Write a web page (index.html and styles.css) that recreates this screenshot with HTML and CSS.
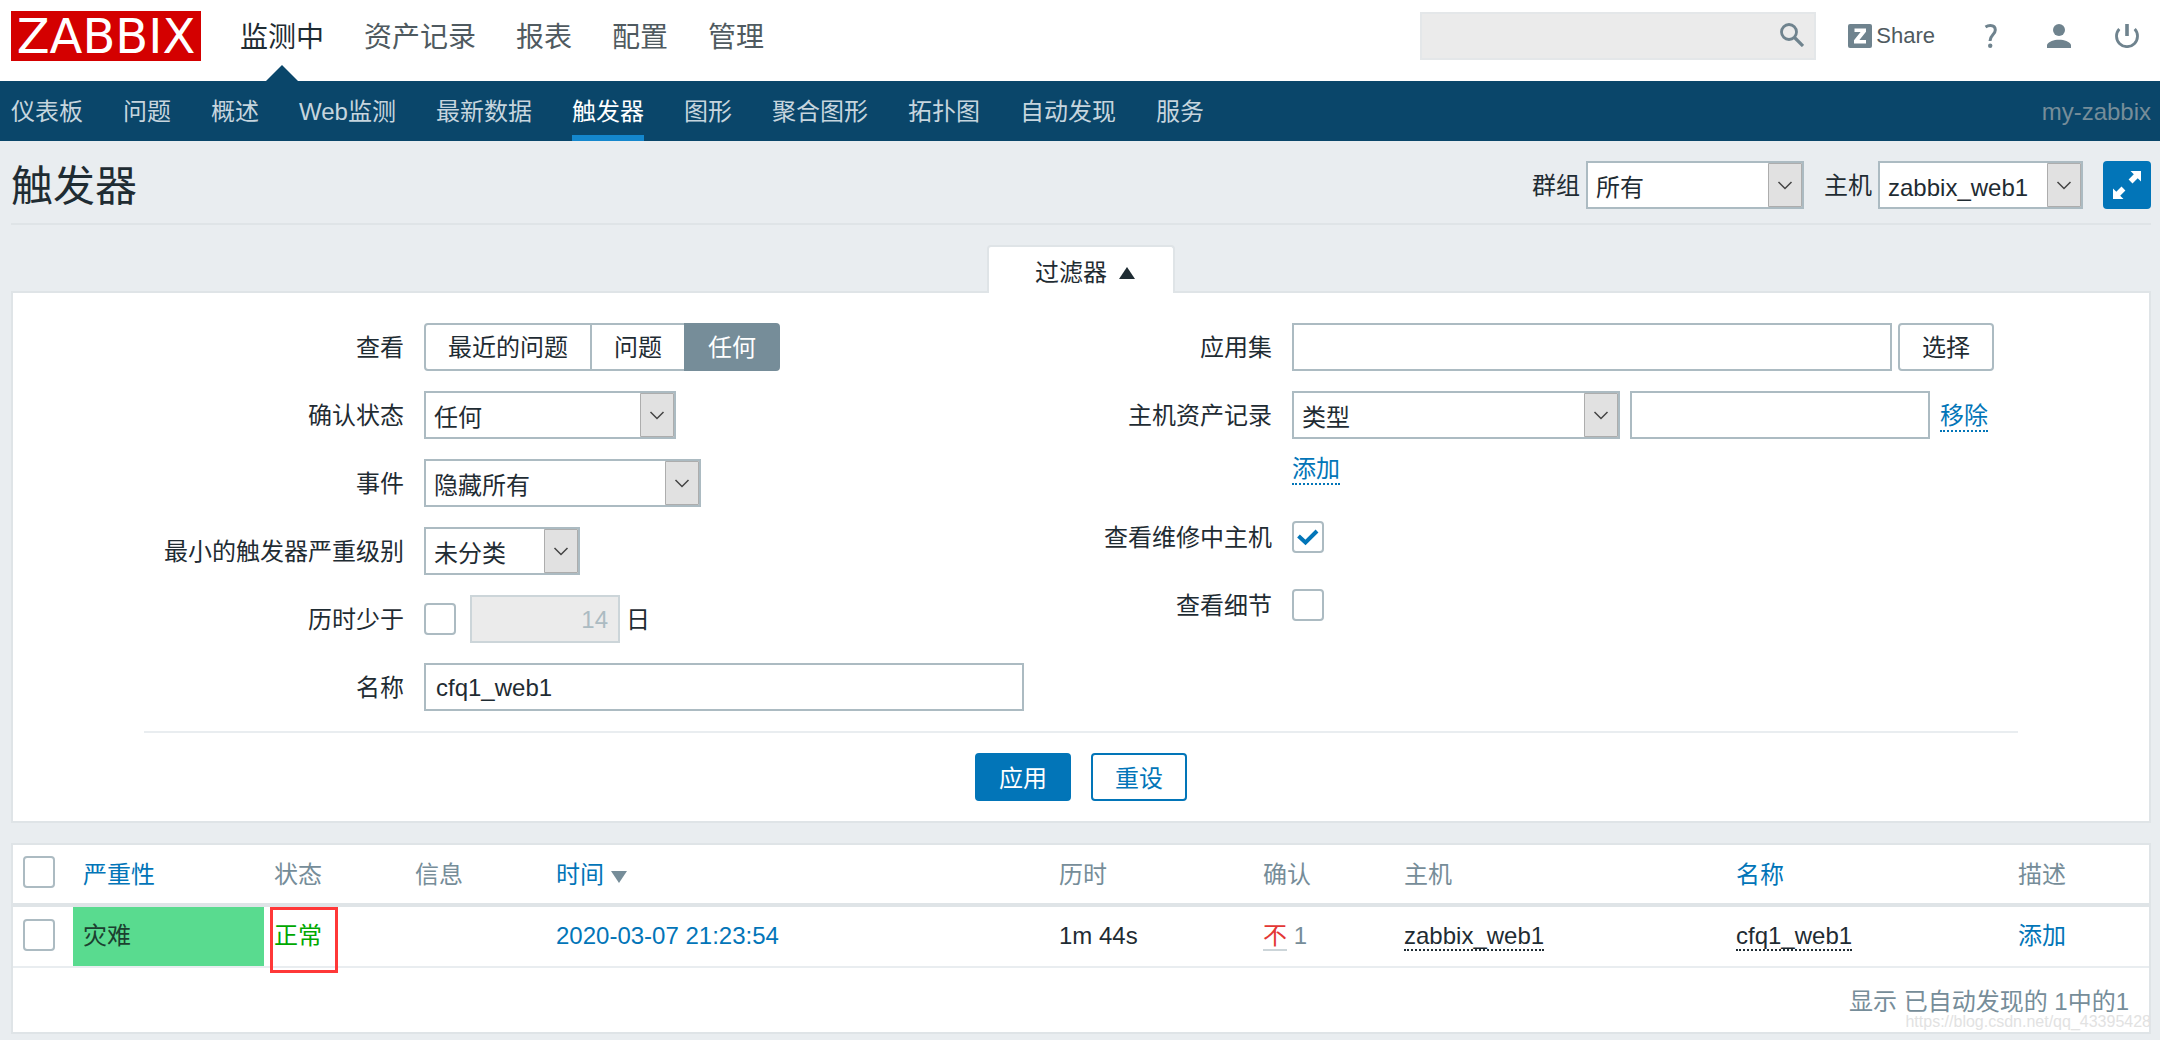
FILE: index.html
```html
<!DOCTYPE html>
<html lang="zh-CN">
<head>
<meta charset="utf-8">
<title>触发器</title>
<link rel="stylesheet" href="styles.css">
</head>
<body>
<header class="top">
  <a class="logo" href="#">ZABBIX</a>
  <nav class="main-nav">
    <a class="selected" href="#">监测中</a>
    <a href="#">资产记录</a>
    <a href="#">报表</a>
    <a href="#">配置</a>
    <a href="#">管理</a>
  </nav>
  <form class="search">
    <input type="text" aria-label="搜索">
    <button type="button" aria-label="搜索">
      <svg viewBox="0 0 24 24" width="24" height="24"><circle cx="9" cy="9" r="7.5" fill="none" stroke="currentColor" stroke-width="2.800"/><path d="M14.500 14.500L23 23" stroke="currentColor" stroke-width="3.200"/></svg>
    </button>
  </form>
  <div class="tools">
    <a class="share" href="#">
      <svg viewBox="0 0 24 24" width="24" height="24"><rect width="24" height="24" rx="2" fill="#6f838e"/><path d="M6.500 4.500H18v3.300l-6.600 8.200H18v3.500H6v-3.300l6.600-8.200H6.500z" fill="#fff"/></svg>
      <span>Share</span>
    </a>
    <a href="#" aria-label="帮助"><svg viewBox="0 0 24 24" width="24" height="24"><path d="M6.500 3C8 2 9.500 1.500 11.300 1.500c3.200 0 5 1.800 5 4.500 0 4.800-5.300 5-5.300 11" fill="none" stroke="currentColor" stroke-width="3"/><circle cx="11.200" cy="21.800" r="2.200" fill="currentColor"/></svg></a>
    <a href="#" aria-label="用户"><svg viewBox="0 0 24 24" width="24" height="24"><circle cx="12" cy="6" r="6" fill="currentColor"/><path d="M0 24v-3.500C2 17.500 6.500 15.800 12 15.800s10 1.700 12 4.700V24z" fill="currentColor"/></svg></a>
    <a href="#" aria-label="退出"><svg viewBox="0 0 24 24" width="24" height="24"><path d="M4.300 5a10.500 10.500 0 1 0 15.400 0" fill="none" stroke="currentColor" stroke-width="2.800"/><path d="M12 0v12" stroke="currentColor" stroke-width="3.600"/></svg></a>
  </div>
</header>

<nav class="sub-nav">
  <a href="#">仪表板</a>
  <a href="#">问题</a>
  <a href="#">概述</a>
  <a href="#">Web监测</a>
  <a href="#">最新数据</a>
  <a class="selected" href="#">触发器</a>
  <a href="#">图形</a>
  <a href="#">聚合图形</a>
  <a href="#">拓扑图</a>
  <a href="#">自动发现</a>
  <a href="#">服务</a>
  <span class="server">my-zabbix</span>
</nav>

<main>
  <div class="title-row">
    <h1>触发器</h1>
    <div class="title-controls">
      <label for="group">群组</label>
      <select id="group" class="w-group"><option>所有</option></select>
      <label for="host" class="second">主机</label>
      <select id="host" class="w-host"><option>zabbix_web1</option></select>
      <button type="button" class="fullscreen" aria-label="全屏">
        <svg viewBox="0 0 48 48" width="48" height="48" fill="#fff"><path d="M27.500 10H38v10.500l-3.300-3.300-5.200 5.200-3.900-3.900 5.200-5.200z"/><path d="M20.500 38H10V27.500l3.300 3.300 5.200-5.200 3.900 3.900-5.200 5.200z"/></svg>
      </button>
    </div>
  </div>

  <div class="tab-row"><button type="button" class="tab">过滤器 <svg viewBox="0 0 16 12" width="16" height="12"><path d="M8 0l8 12H0z" fill="#1f2c33"/></svg></button></div>

  <form class="filter">
    <div class="columns">
      <div class="column">
        <span class="label">查看</span>
        <div class="field segments">
          <label><input type="radio" name="show"><span>最近的问题</span></label>
          <label><input type="radio" name="show"><span>问题</span></label>
          <label><input type="radio" name="show" checked><span>任何</span></label>
        </div>
        <label class="label" for="ack">确认状态</label>
        <div class="field"><select id="ack" class="w-ack"><option>任何</option></select></div>
        <label class="label" for="events">事件</label>
        <div class="field"><select id="events" class="w-events"><option>隐藏所有</option></select></div>
        <label class="label" for="severity">最小的触发器严重级别</label>
        <div class="field"><select id="severity" class="w-severity"><option>未分类</option></select></div>
        <label class="label" for="age">历时少于</label>
        <div class="field"><input type="checkbox" id="age"><input type="text" class="days" value="14" disabled aria-label="天数"><span class="unit">日</span></div>
        <label class="label" for="name">名称</label>
        <div class="field"><input type="text" id="name" class="wide" value="cfq1_web1"></div>
      </div>
      <div class="column">
        <label class="label" for="app">应用集</label>
        <div class="field"><input type="text" id="app" class="wide"><button type="button" class="pick">选择</button></div>
        <label class="label" for="inventory">主机资产记录</label>
        <div class="field"><select id="inventory" class="w-inventory"><option>类型</option></select><input type="text" class="value" aria-label="值"><a class="dotted" href="#">移除</a></div>
        <div class="field add"><a class="dotted" href="#">添加</a></div>
        <label class="label" for="maintenance">查看维修中主机</label>
        <div class="field"><input type="checkbox" id="maintenance" checked></div>
        <label class="label" for="details">查看细节</label>
        <div class="field"><input type="checkbox" id="details"></div>
      </div>
    </div>
    <div class="actions">
      <button type="button" class="primary">应用</button>
      <button type="button" class="secondary">重设</button>
    </div>
  </form>

  <section class="results">
    <table>
      <colgroup><col class="c-check"><col class="c-severity"><col class="c-short"><col class="c-short"><col><col class="c-age"><col class="c-short"><col class="c-host"><col class="c-name"><col class="c-short"></colgroup>
      <thead>
        <tr>
          <th class="check"><input type="checkbox" aria-label="全选"></th>
          <th><a href="#">严重性</a></th>
          <th>状态</th>
          <th>信息</th>
          <th><a href="#">时间</a> <svg viewBox="0 0 16 12" width="16" height="12"><path d="M0 0h16L8 12z" fill="#768d99"/></svg></th>
          <th>历时</th>
          <th>确认</th>
          <th>主机</th>
          <th><a href="#">名称</a></th>
          <th>描述</th>
        </tr>
      </thead>
      <tbody>
        <tr>
          <td class="check"><input type="checkbox" aria-label="选择 cfq1_web1"></td>
          <td class="disaster">灾难</td>
          <td class="status">正常<span class="mark"></span></td>
          <td></td>
          <td><a href="#">2020-03-07 21:23:54</a></td>
          <td>1m 44s</td>
          <td><a class="no" href="#">不</a> <span class="count">1</span></td>
          <td><a class="dotted dark" href="#">zabbix_web1</a></td>
          <td><a class="dotted dark" href="#">cfq1_web1</a></td>
          <td><a href="#">添加</a></td>
        </tr>
      </tbody>
    </table>
    <div class="total">显示 已自动发现的 1中的1</div>
    <span class="watermark">https://blog.csdn.net/qq_43395428</span>
  </section>
</main>
</body>
</html>
```

FILE: styles.css
```css
* { box-sizing: border-box; }

body {
  margin: 0;
  background: #e9edf0;
  color: #1f2c33;
  font: 24px/32px "Liberation Sans", "Noto Sans CJK SC", sans-serif;
}

a { color: #0275b8; text-decoration: none; }
svg { flex: none; }
button, input, select { font: inherit; color: inherit; margin: 0; }

/* top bar */
.top {
  display: flex;
  align-items: center;
  height: 81px;
  padding: 0 21px 9px 11px;
  background: #fff;
}
.logo {
  width: 190px;
  height: 50px;
  background: #d40000;
  color: #fff;
  font: 48px/50px "DejaVu Sans", sans-serif;
  text-align: center;
}
.main-nav { display: flex; gap: 40px; margin-left: 39px; padding-top: 4px; font-size: 28px; line-height: 72px; }
.main-nav a { color: #4f5a60; }
.main-nav .selected { position: relative; color: #1f2c33; }
.main-nav .selected::after {
  content: "";
  position: absolute;
  left: calc(50% - 16px);
  bottom: -7px;
  border: 16px solid transparent;
  border-top: 0;
  border-bottom-color: #0a466a;
}
.search {
  display: flex;
  width: 396px;
  height: 48px;
  margin-left: auto;
  background: #ebebeb;
  border: 2px solid #e4e7e9;
}
.search input { flex: 1; min-width: 0; background: none; border: 0; padding: 0 10px; outline: 0; }
.search button { width: 44px; padding: 0 10px 2px; border: 0; background: none; color: #6f838e; line-height: 0; }
.tools { display: flex; align-items: center; gap: 44px; margin-left: 32px; }
.tools a { display: flex; align-items: center; color: #6f838e; }
.tools .share { gap: 4px; font-size: 22px; }
.share span { color: #4f5a60; }

/* section bar */
.sub-nav {
  display: flex;
  gap: 40px;
  height: 60px;
  padding: 0 9px 0 11px;
  background: #0a466a;
  line-height: 62px;
}
.sub-nav a { color: #c6d5de; }
.sub-nav .selected { color: #fff; border-bottom: 6px solid #1487cd; }
.sub-nav .server { margin-left: auto; color: #768d99; }

/* page title */
main { padding: 0 9px 6px 11px; }
.title-row {
  display: flex;
  justify-content: space-between;
  align-items: center;
  height: 84px;
  padding-top: 6px;
  border-bottom: 2px solid #dfe4e7;
}
h1 { margin: 0; padding-top: 4px; font-size: 42px; font-weight: 400; line-height: 56px; }
.title-controls { display: flex; align-items: center; gap: 6px; }
.title-controls label { padding-top: 2px; }
.title-controls .second { margin-left: 14px; }
.fullscreen { width: 48px; height: 48px; margin-left: 14px; padding: 0; border: 0; border-radius: 4px; background: #0275b8; line-height: 0; }

/* controls */
select {
  appearance: none;
  height: 48px;
  padding: 5px 40px 0 8px;
  border: 2px solid #acbbc2;
  border-radius: 0;
  background: #fff url("data:image/svg+xml,%3Csvg xmlns='http://www.w3.org/2000/svg' width='34' height='44'%3E%3Cpath d='M.5.5h33v43H.5z' fill='%23e1e1e1' stroke='%23adadad'/%3E%3Cpath d='M10.500 19l6.500 6.500L23.500 19' fill='none' stroke='%23444' stroke-width='1.500'/%3E%3C/svg%3E") right center no-repeat;
}
.w-group { width: 218px; }
.w-host { width: 205px; }
.w-ack { width: 252px; }
.w-events { width: 277px; }
.w-severity { width: 156px; }
.w-inventory { width: 328px; }

input[type="text"] { height: 48px; padding: 2px 10px 0; border: 2px solid #acbbc2; border-radius: 0; background: #fff; }
.search input[type="text"] { height: 44px; border: 0; background: none; }
input[type="checkbox"] {
  appearance: none;
  display: block;
  flex: none;
  width: 32px;
  height: 32px;
  border: 2px solid #acbbc2;
  border-radius: 4px;
  background: #fff;
}
input[type="checkbox"]:checked {
  background: #fff url("data:image/svg+xml,%3Csvg xmlns='http://www.w3.org/2000/svg' width='28' height='28'%3E%3Cpath d='M4.500 13l7 6.500L23 8' fill='none' stroke='%230275b8' stroke-width='4'/%3E%3C/svg%3E") center no-repeat;
}
.dotted { border-bottom: 2px dotted; line-height: 28px; }
.dark { color: #1f2c33; }

/* filter */
.tab-row { display: flex; justify-content: center; padding-top: 20px; }
.tab {
  position: relative;
  display: flex;
  align-items: center;
  gap: 12px;
  height: 48px;
  margin-bottom: -2px;
  padding: 6px 38px 0 46px;
  border: 2px solid #dfe4e7;
  border-bottom: 0;
  border-radius: 4px 4px 0 0;
  background: #fff;
}
.filter { padding: 30px 131px 20px; border: 2px solid #dfe4e7; background: #fff; }
.columns { display: flex; gap: 80px; padding-bottom: 20px; border-bottom: 2px solid #e9edf0; }
.column { display: grid; grid-template-columns: 260px auto; grid-auto-rows: 48px; column-gap: 20px; row-gap: 20px; align-content: start; }
.column + .column { grid-template-columns: 168px auto; grid-template-rows: 48px 48px 34px 48px 48px; }
.label { align-self: center; padding-top: 2px; text-align: right; white-space: nowrap; }
.field { display: flex; align-items: center; grid-column: 2; }
.field .dotted { margin-top: 4px; }
.add { align-items: flex-start; margin-top: -8px; }
.wide { width: 600px; }
.pick { height: 48px; width: 96px; margin-left: 6px; padding: 2px 0 0; border: 2px solid #acbbc2; border-radius: 4px; background: #fff; }
.value { width: 300px; margin: 0 10px; }
.days { width: 150px; margin: 0 6px 0 14px; text-align: right; }
.unit { padding-top: 2px; }
input.days:disabled { border-color: #ccd5d9; background: #ebebeb; color: #acbbc2; }
.segments label { display: flex; }
.segments label + label { margin-left: -2px; }
.segments input { position: absolute; opacity: 0; }
.segments span { height: 48px; padding: 0 22px; border: 2px solid #acbbc2; line-height: 46px; }
.segments label:first-child span { border-radius: 4px 0 0 4px; }
.segments label:last-child span { border-radius: 0 4px 4px 0; }
.segments input:checked + span { border-color: #768d99; background: #768d99; color: #fff; }
.actions { display: flex; justify-content: center; gap: 20px; padding-top: 20px; }
.actions button { width: 96px; height: 48px; padding: 4px 0 0; border: 2px solid #0275b8; border-radius: 4px; background: #fff; color: #0275b8; }
.actions .primary { background: #0275b8; color: #fff; }

/* results */
.results { position: relative; margin-top: 20px; border: 2px solid #dfe4e7; background: #fff; }
table { width: 100%; table-layout: fixed; border-collapse: separate; border-spacing: 0; }
.c-check { width: 60px; }
.c-severity { width: 191px; }
.c-short { width: 141px; }
.c-age { width: 204px; }
.c-host { width: 332px; }
.c-name { width: 282px; }
th, td { padding: 0 10px; text-align: left; font-weight: 400; white-space: nowrap; }
th { height: 62px; padding-top: 2px; border-bottom: 4px solid #dfe4e7; color: #768d99; }
td { height: 61px; padding-bottom: 2px; border-bottom: 2px solid #e9edf0; }
.check { padding-top: 0; padding-bottom: 4px; }
.disaster { background: #59db8f; background-clip: padding-box; color: #1c4030; }
.status { position: relative; color: #00a800; }
.mark { position: absolute; left: 6px; top: 0; width: 68px; height: 66px; border: 3px solid #ff3838; }
.no { border-bottom: 2px solid #ccd5d9; color: #e33734; }
.count { color: #768d99; }
.total { padding: 18px 20px 14px; text-align: right; color: #768d99; }
.watermark { position: absolute; right: -2px; bottom: 0; color: #e2e2e2; font-size: 16px; line-height: 20px; }
```
